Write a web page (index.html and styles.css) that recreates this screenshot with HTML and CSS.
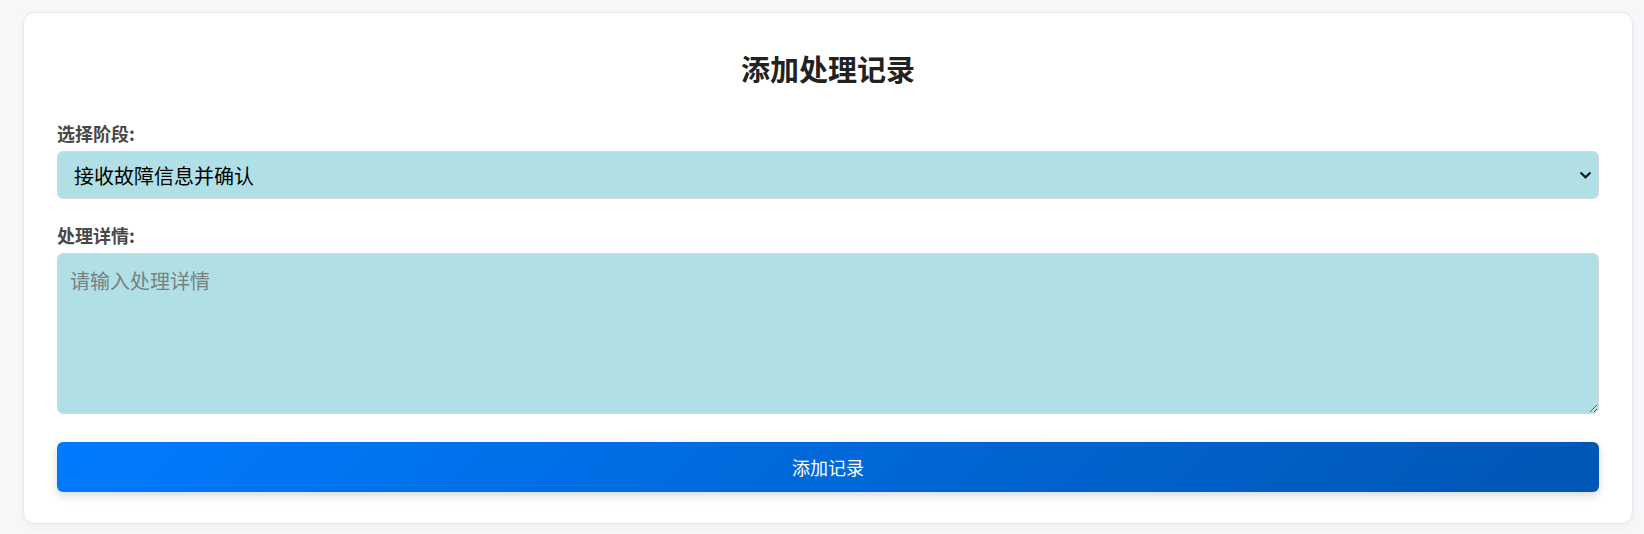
FILE: index.html
```html
<!DOCTYPE html>
<html>
<head>
<meta charset="utf-8" />
<title>添加处理记录</title>
<link rel="stylesheet" href="styles.css">
</head>
<body>

<div class="recordCard">
  <h2 class="recordTitle">添加处理记录</h2>

  <label class="fieldLabel" for="stage">选择阶段:</label>
  <select id="stage" class="stageSelect">
    <option>接收故障信息并确认</option>
    <option>现场勘查</option>
    <option>故障处理</option>
    <option>处理完成</option>
  </select>

  <label class="fieldLabel" for="detail">处理详情:</label>
  <textarea id="detail" class="detailInput" placeholder="请输入处理详情"></textarea>

  <button type="button" class="addButton">添加记录</button>
</div>

</body>
</html>
```

FILE: styles.css
```css
body
{
    margin: 0;
    padding: 12px 11px 10px 23px;
    background-color: #f6f7f9;
    font-family: "Noto Sans CJK SC", "Noto Sans", sans-serif;
}

.recordCard
{
    background-color: #ffffff;
    border: 1px solid #e6e8eb;
    border-radius: 12px;
    padding: 32px 33px 31px 33px;
    box-shadow: 0 2px 8px rgba(0, 0, 0, 0.05);
}

.recordTitle
{
    margin: 0 0 29px 0;
    text-align: center;
    font-size: 29px;
    line-height: 46px;
    font-weight: bold;
    color: #222222;
}

.fieldLabel
{
    display: block;
    font-size: 18px;
    line-height: 26px;
    font-weight: bold;
    color: #484848;
    margin-bottom: 5px;
}

.stageSelect
{
    display: block;
    width: 100%;
    height: 48px;
    padding: 0 30px 0 16px;
    margin-bottom: 23px;
    font-family: inherit;
    font-size: 20px;
    color: #000000;
    background-color: powderblue;
    background-image: url("data:image/svg+xml;utf8,<svg xmlns='http://www.w3.org/2000/svg' width='13' height='8' viewBox='0 0 13 8'><path d='M1.5 1.5 L6.5 6.2 L11.5 1.5' fill='none' stroke='%23111' stroke-width='2.2'/></svg>");
    background-repeat: no-repeat;
    background-position: right 6px center;
    background-size: 13px 8px;
    border: 1px solid #d4d8dc;
    border-radius: 6px;
    box-sizing: border-box;
    appearance: none;
    -webkit-appearance: none;
}

.detailInput
{
    display: block;
    width: 100%;
    height: 161px;
    padding: 12px;
    margin: 0 0 28px 0;
    font-family: inherit;
    font-size: 20px;
    background-color: powderblue;
    border: 1px solid #d4d8dc;
    border-radius: 6px;
    box-sizing: border-box;
}

.detailInput::placeholder
{
    color: #7a7f80;
}

.addButton
{
    display: block;
    width: 100%;
    height: 50px;
    font-family: inherit;
    font-size: 18px;
    color: #ffffff;
    border: none;
    border-radius: 6px;
    background: linear-gradient(135deg, #007bff, #0056b3);
    box-shadow: 0 4px 10px rgba(0, 0, 0, 0.15);
}
```
